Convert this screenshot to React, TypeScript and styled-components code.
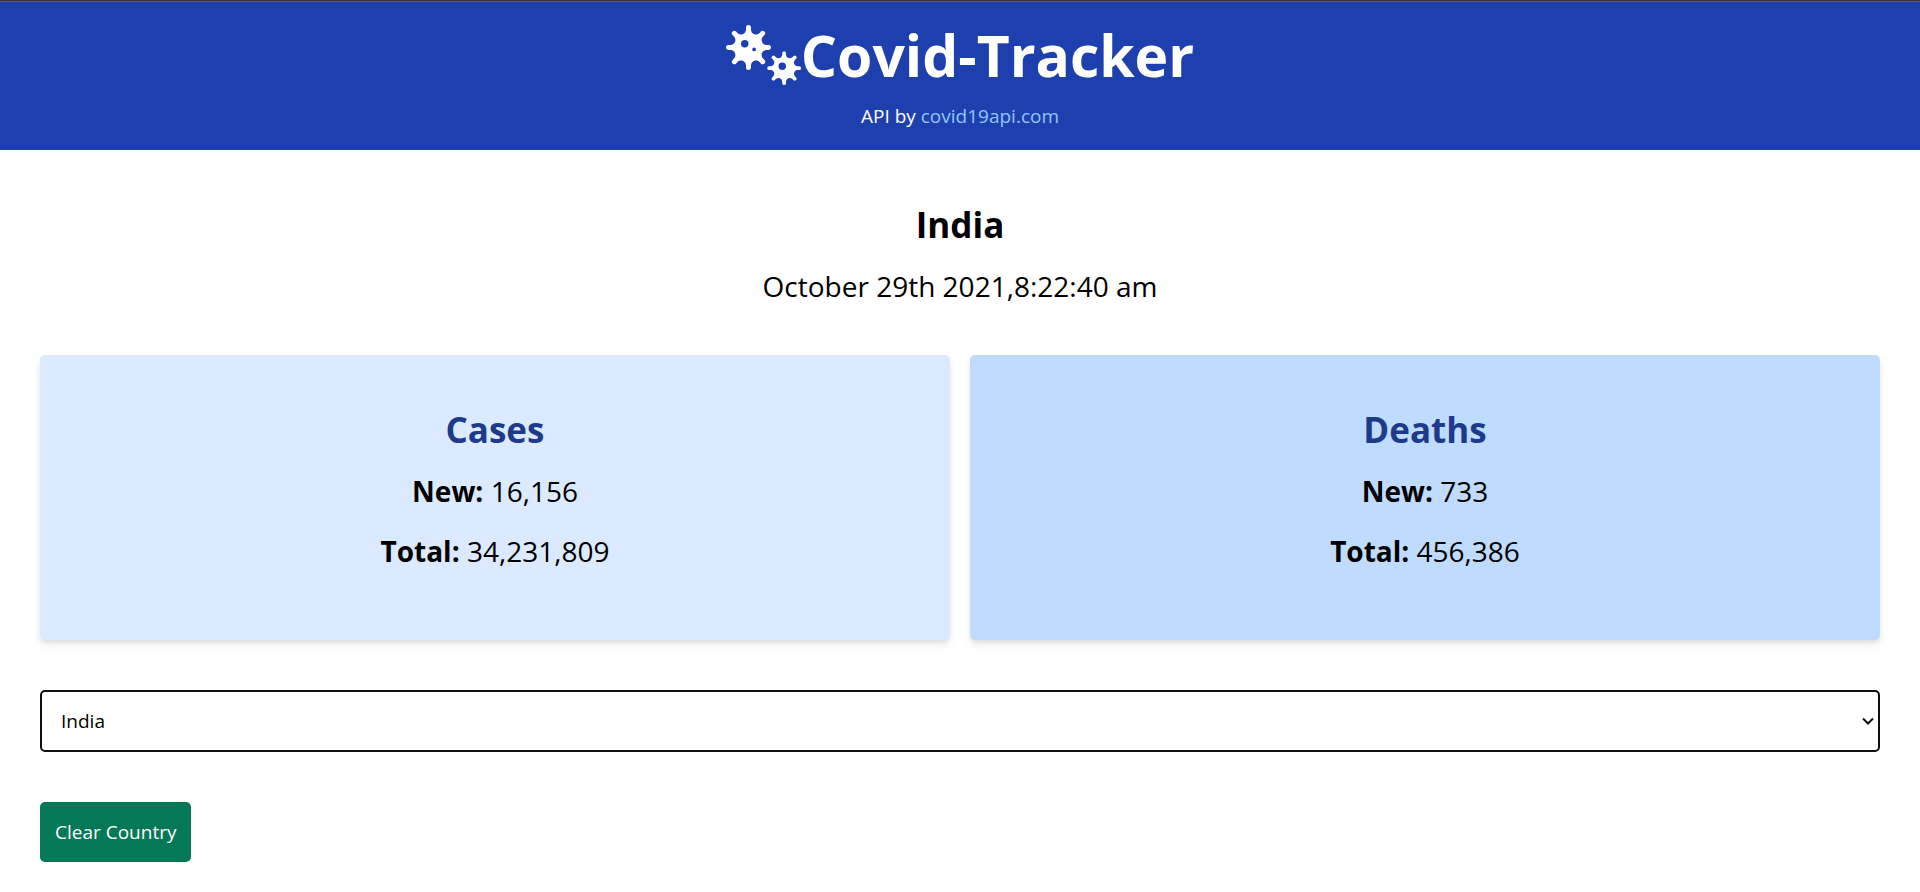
import React, { useState } from "react";
import styled, { createGlobalStyle } from "styled-components";
import { FaViruses } from "react-icons/fa";

const GlobalStyle = createGlobalStyle`
  *, *::before, *::after { box-sizing: border-box; }
  body {
    margin: 0;
    background: #fff;
    color: #000;
    font-family: "Segoe UI", "Open Sans", "Noto Sans", sans-serif;
    font-size: 19px;
    line-height: 30px;
  }
  h1, h2, p { margin: 0; }
`;

const Header = styled.header`
  padding: 24px 20px 19px;
  border-top: 1px solid #35363a;
  box-shadow: inset 0 1px #5f5f66;
  background: #1e40af;
  color: #fff;
  text-align: center;
`;

const Brand = styled.h1`
  display: flex;
  align-items: flex-start;
  justify-content: center;
  margin-bottom: 16px;
  font-size: 57px;
  font-weight: 700;
  line-height: 60px;
`;

const BrandIcon = styled(FaViruses)`
  width: 75px;
  height: 60px;
`;

const ApiLink = styled.a`
  color: #93c5fd;
  text-decoration: none;
`;

const Main = styled.main`
  padding: 50px 40px 30px;
`;

const Intro = styled.section`
  margin-bottom: 49px;
  text-align: center;
`;

const Title = styled.h2<{ $accent?: boolean }>`
  margin-bottom: 16px;
  color: ${(p) => (p.$accent ? "#1e3a8a" : "inherit")};
  font-size: 35px;
  font-weight: 700;
  line-height: 50px;
`;

const Line = styled.p`
  font-size: 28px;
  line-height: 40px;

  & + & { margin-top: 20px; }
`;

const Label = styled.strong`
  font-weight: 700;
`;

const Cards = styled.section`
  display: grid;
  grid-template-columns: 1fr 1fr;
  gap: 20px;
`;

const Card = styled.article<{ $tone: string }>`
  padding: 50px 50px 69px;
  border-radius: 5px;
  background: ${(p) => p.$tone};
  box-shadow: 0 5px 8px -1px rgba(0, 0, 0, 0.1), 0 3px 5px -1px rgba(0, 0, 0, 0.06);
  text-align: center;
`;

const SelectField = styled.div`
  position: relative;
  margin: 50px 0;
`;

const CountrySelect = styled.select`
  display: block;
  width: 100%;
  padding: 14px 40px 14px 19px;
  border: 2px solid #101010;
  border-radius: 5px;
  appearance: none;
  background: #fff;
  color: #000;
  font: inherit;
`;

const Chevron = styled.svg`
  position: absolute;
  top: 50%;
  right: 6px;
  width: 12px;
  height: 8px;
  margin-top: -4px;
  pointer-events: none;
`;

const ClearButton = styled.button`
  padding: 15px;
  border: 0;
  border-radius: 5px;
  background: #047857;
  color: #fff;
  font: inherit;
  cursor: pointer;
`;

const stats = [
  { name: "Cases", fresh: "16,156", total: "34,231,809", tone: "#dbeafe" },
  { name: "Deaths", fresh: "733", total: "456,386", tone: "#bfdbfe" },
];

export default function App() {
  const [country, setCountry] = useState("India");
  return (
    <>
      <GlobalStyle />
      <Header>
        <Brand>
          <BrandIcon aria-hidden="true" />
          Covid-Tracker
        </Brand>
        <p>
          API by <ApiLink href="#api">covid19api.com</ApiLink>
        </p>
      </Header>
      <Main>
        <Intro>
          <Title>India</Title>
          <Line>October 29th 2021,8:22:40 am</Line>
        </Intro>
        <Cards>
          {stats.map((s) => (
            <Card key={s.name} $tone={s.tone}>
              <Title $accent>{s.name}</Title>
              <Line>
                <Label>New:</Label> {s.fresh}
              </Line>
              <Line>
                <Label>Total:</Label> {s.total}
              </Line>
            </Card>
          ))}
        </Cards>
        <SelectField>
          <CountrySelect
            aria-label="Country"
            value={country}
            onChange={(e) => setCountry(e.target.value)}
          >
            <option>India</option>
          </CountrySelect>
          <Chevron viewBox="0 0 12 8" aria-hidden="true">
            <path d="M1 1.5 6 6.5 11 1.5" fill="none" stroke="#101010" strokeWidth="2" />
          </Chevron>
        </SelectField>
        <ClearButton type="button" onClick={() => setCountry("India")}>
          Clear Country
        </ClearButton>
      </Main>
    </>
  );
}
